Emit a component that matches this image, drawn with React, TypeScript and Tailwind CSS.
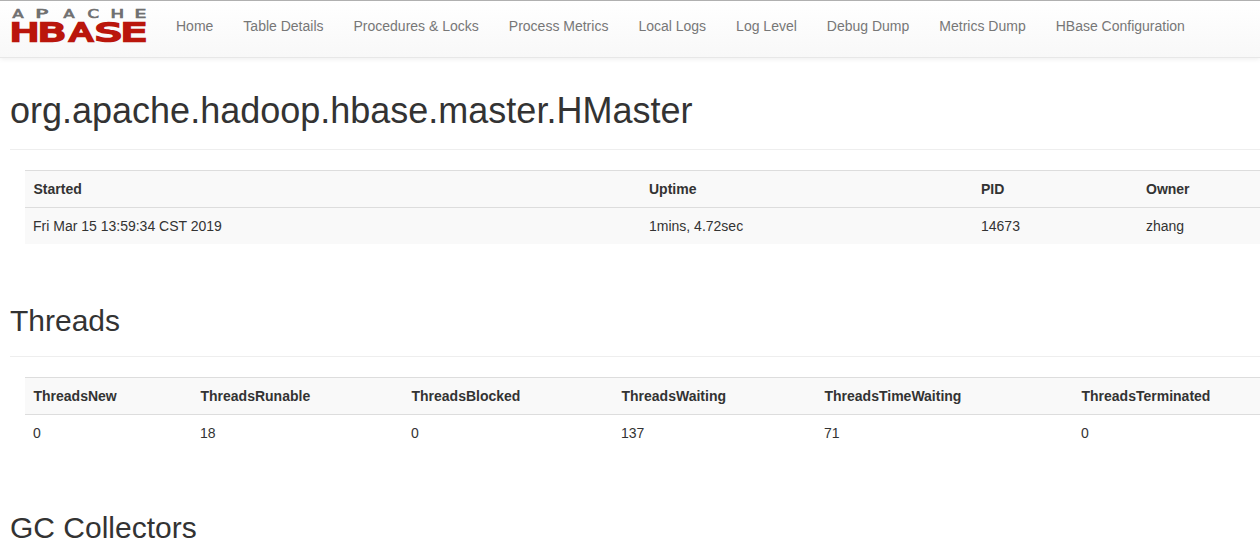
import React from "react";

const NAV_ITEMS = [
  "Home",
  "Table Details",
  "Procedures & Locks",
  "Process Metrics",
  "Local Logs",
  "Log Level",
  "Debug Dump",
  "Metrics Dump",
  "HBase Configuration",
];

type Column = { label: string; value: string; width: string; inset?: boolean };

const MASTER: Column[] = [
  { label: "Started", value: "Fri Mar 15 13:59:34 CST 2019", width: "w-[616px]", inset: true },
  { label: "Uptime", value: "1mins, 4.72sec", width: "w-[332px]" },
  { label: "PID", value: "14673", width: "w-[165px]" },
  { label: "Owner", value: "zhang", width: "w-[187px]" },
];

const THREADS: Column[] = [
  { label: "ThreadsNew", value: "0", width: "w-[167px]", inset: true },
  { label: "ThreadsRunable", value: "18", width: "w-[211px]", inset: true },
  { label: "ThreadsBlocked", value: "0", width: "w-[210px]", inset: true },
  { label: "ThreadsWaiting", value: "137", width: "w-[203px]", inset: true },
  { label: "ThreadsTimeWaiting", value: "71", width: "w-[257px]", inset: true },
  { label: "ThreadsTerminated", value: "0", width: "w-[252px]", inset: true },
];

// [letter, x offset, horizontal stretch]
type Letter = [string, number, number];

const TOP_LETTERS: Letter[] = [
  ["A", 1.4, 1.38],
  ["P", 24.3, 1.85],
  ["A", 52.4, 1.38],
  ["C", 76.6, 1.4],
  ["H", 99.6, 1.55],
  ["E", 123.5, 1.6],
];

const MAIN_LETTERS: Letter[] = [
  ["H", -0.94, 1.55],
  ["B", 27, 1.62],
  ["A", 58.4, 1.36],
  ["S", 84.3, 1.65],
  ["E", 110, 1.62],
];

function Letters({ letters, y, size, color, weight }: { letters: Letter[]; y: number; size: number; color: string; weight: number }) {
  return (
    <g fontFamily="'DejaVu Sans', sans-serif" fontSize={size} fill={color} stroke={color} strokeWidth={weight}>
      {letters.map(([ch, x, sx], i) => (
        <text key={i} transform={`translate(${x} ${y}) scale(${sx} 1)`}>
          {ch}
        </text>
      ))}
    </g>
  );
}

function Logo() {
  return (
    <svg width="136" height="36" viewBox="0 0 136 36" className="block shrink-0 overflow-visible" aria-label="Apache HBase">
      <Letters letters={TOP_LETTERS} y={9.8} size={11.7} color="#707070" weight={0.7} />
      <Letters letters={MAIN_LETTERS} y={32.7} size={25} color="#ba160c" weight={2.4} />
    </svg>
  );
}

function DataTable({ columns, striped }: { columns: Column[]; striped?: boolean }) {
  return (
    <table className="ml-[15px] w-[1300px] table-fixed border-separate border-spacing-0 text-left">
      <thead>
        <tr className="bg-[#f9f9f9]">
          {columns.map((c) => (
            <th
              key={c.label}
              className={`${c.width} ${c.inset ? "pl-[8.5px]" : "pl-2"} border-t border-[#ddd] py-2 font-bold leading-5`}
            >
              {c.label}
            </th>
          ))}
        </tr>
      </thead>
      <tbody>
        <tr className={striped ? "bg-[#f9f9f9]" : "bg-white"}>
          {columns.map((c) => (
            <td key={c.label} className="border-t border-[#ddd] p-2 leading-5">
              {c.value}
            </td>
          ))}
        </tr>
      </tbody>
    </table>
  );
}

export default function App() {
  return (
    <div className="h-[555px] w-full overflow-hidden bg-white font-['Liberation_Sans',Arial,sans-serif] text-sm text-[#333]">
      <header className="flex h-[58px] items-start border-t border-b border-t-[#b0b0b0] border-b-[#e7e7e7] bg-linear-to-b from-white to-[#f8f8f8] pl-[11px] shadow-[0_1px_5px_rgba(0,0,0,0.075)]">
        <div className="pt-[7px]">
          <Logo />
        </div>
        <nav className="ml-[14px] flex pt-[15px]">
          {NAV_ITEMS.map((item) => (
            <a key={item} className="whitespace-nowrap px-[15px] leading-5 text-[#777]">
              {item}
            </a>
          ))}
        </nav>
      </header>
      <main className="pl-[10px]">
        <section>
          <h1 className="mb-5 h-[92px] border-b border-[#eee] pt-[33px] text-[36px] leading-[39.6px]">
            org.apache.hadoop.hbase.master.HMaster
          </h1>
          <DataTable columns={MASTER} striped />
        </section>
        <section className="pt-[60px]">
          <h2 className="mb-5 h-[53px] border-b border-[#eee] text-[30px] leading-[33px]">Threads</h2>
          <DataTable columns={THREADS} />
        </section>
        <section className="pt-[60px]">
          <h2 className="h-[53px] border-b border-[#eee] text-[30px] leading-[33px]">GC Collectors</h2>
        </section>
      </main>
    </div>
  );
}
